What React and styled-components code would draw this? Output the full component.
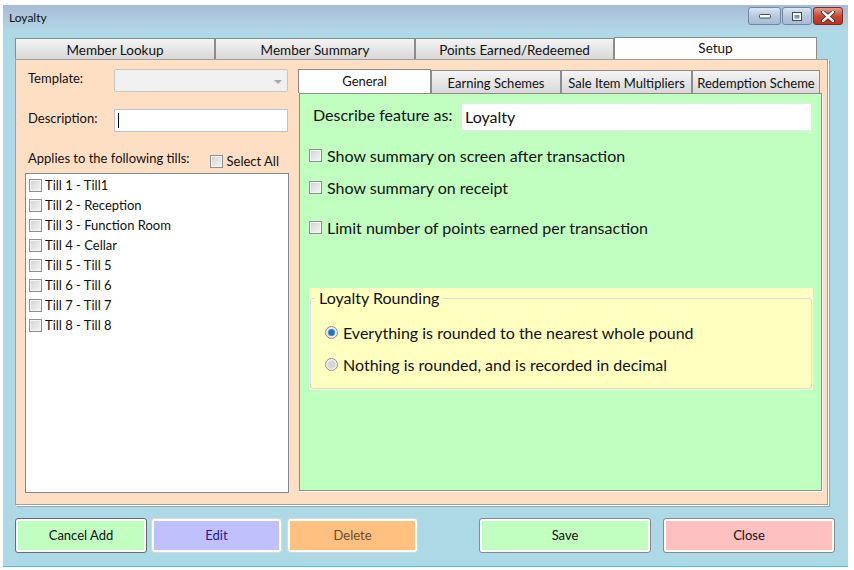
import React from 'react'
import styled, { createGlobalStyle } from 'styled-components'

const GlobalStyle = createGlobalStyle`
  html, body { margin: 0; padding: 0; background: #fff; }
  body { font-family: "Lato", "Noto Sans", sans-serif; color: #111; }
  * { box-sizing: border-box; }
`;

const Window = styled.div`
  margin: 5px 0 0 3px;
  width: 845px;
  height: 562px;
  background: #add8e6;
  border-bottom: 1px solid #3fc4ee;
  display: flex;
  flex-direction: column;
`;

const TitleBar = styled.div`
  height: 27px;
  display: flex;
  justify-content: space-between;
  background: linear-gradient(#a8bcd6, #b2d8e6);
`;

const TitleText = styled.div`
  font-size: 12px;
  padding: 5px 0 0 6px;
`;

const Controls = styled.div`
  display: flex;
  gap: 1px;
  margin: 2px 5px 0 0;
`;

const CtrlButton = styled.div`
  width: ${p => p.w}px;
  height: 18px;
  border: 1px solid ${p => (p.danger ? '#7a2a22' : '#6f86a4')};
  border-radius: 3px;
  background: ${p => (p.danger
    ? 'linear-gradient(#e39a8c, #c94a35 50%, #b9321e)'
    : 'linear-gradient(#dbe6f2, #b7c9de 50%, #a7bbd3)')};
  display: flex;
  align-items: center;
  justify-content: center;
`;

const Body = styled.div`
  padding: 5px 0 0 12px;
  display: flex;
  flex-direction: column;
`;

const TabStrip = styled.div`
  display: flex;
  align-items: flex-end;
  height: ${p => p.h}px;
`;

const MainTab = styled.div`
  width: ${p => p.w}px;
  height: ${p => (p.active ? 22 : 21)}px;
  border: 1px solid #8c8c8c;
  border-bottom: none;
  background: ${p => (p.active ? '#fff' : 'linear-gradient(#f4f4f4, #e6e6e6 50%, #d8d8d8)')};
  font-size: 13.5px;
  display: flex;
  justify-content: center;
  align-items: ${p => (p.active ? 'flex-start' : 'center')};
  padding-top: ${p => (p.active ? 2 : 1)}px;
  white-space: nowrap;
`;

const TabPanel = styled.div`
  width: 813px;
  height: 446px;
  background: #ffdfc3;
  border: 1px solid #a0a0a0;
  box-shadow: 1px 1px 0 #fff, 2px 2px 0 #9aa;
  padding: 9px 0 0 9px;
  display: flex;
  gap: 9px;
`;

const LeftCol = styled.div`
  width: 264px;
  display: flex;
  flex-direction: column;
`;

const FieldRow = styled.div`
  display: flex;
  align-items: center;
  height: 23px;
  margin-top: ${p => p.mt || 0}px;
`;

const SmallLabel = styled.div`
  width: 89px;
  padding-left: 3px;
  font-size: 13px;
  margin-top: -6px;
`;

const Combo = styled.div`
  width: 174px;
  height: 23px;
  border: 1px solid #c6c6c6;
  border-radius: 2px;
  background: #f0f0f0;
  display: flex;
  justify-content: flex-end;
  align-items: center;
  padding-right: 5px;
`;

const Arrow = styled.div`
  width: 0;
  height: 0;
  border-left: 4px solid transparent;
  border-right: 4px solid transparent;
  border-top: 4px solid #a8a8a8;
  margin-top: 2px;
`;

const TextBox = styled.div`
  width: ${p => p.w}px;
  height: ${p => p.h}px;
  background: #fff;
  border: 1px solid ${p => p.bc || '#abadb3'};
  display: flex;
  align-items: center;
  padding: 0 0 1px 3px;
  font-size: 16px;
`;

const Caret = styled.div`
  width: 1px;
  height: 15px;
  background: #000;
`;

const TillsHeader = styled.div`
  height: 41px;
  display: flex;
  align-items: flex-end;
  padding: 0 10px 7px 3px;
  font-size: 13px;
`;

const SelectAll = styled.label`
  margin-left: auto;
  margin-bottom: -3px;
  display: flex;
  align-items: center;
  gap: 4px;
  font-size: 13px;
`;

const Box = styled.span`
  display: inline-block;
  flex: none;
  width: 13px;
  height: 13px;
  border: 1px solid #8f8f8f;
  background: linear-gradient(135deg, #d2d2d2, #f6f6f6);
  box-shadow: inset 0 0 0 1px #f4f4f4;
`;

const TillList = styled.div`
  width: 264px;
  height: 320px;
  background: #fff;
  border: 1px solid #828790;
  padding: 1px 0 0 3px;
`;

const TillItem = styled.div`
  height: 20px;
  display: flex;
  align-items: center;
  gap: 3px;
  font-size: 13px;
`;

const RightCol = styled.div`
  width: 524px;
  display: flex;
  flex-direction: column;
`;

const SubTab = styled(MainTab)`
  height: ${p => (p.active ? 24 : 23)}px;
  padding-top: ${p => (p.active ? 3 : 1)}px;
  font-size: 13px;
`;

const GreenPanel = styled.div`
  margin-left: 1px;
  width: 523px;
  height: 398px;
  background: #c0ffc0;
  border: 1px solid #8d8d8d;
  box-shadow: 1px 1px 0 #fff;
  padding-top: 9px;
  display: flex;
  flex-direction: column;
`;

const DescribeRow = styled.div`
  display: flex;
  align-items: center;
  height: 28px;
`;

const BigLabel = styled.div`
  width: 161px;
  padding-left: 13px;
  font-size: 16px;
  margin-top: -5px;
`;

const CheckRow = styled.label`
  height: 32px;
  display: flex;
  align-items: center;
  gap: 5px;
  padding-left: 9px;
  font-size: 16px;
  margin-top: ${p => p.mt || 0}px;
  span + & { margin-top: 0; }
`;

const Group = styled.div`
  margin: 45px 0 0 9px;
  width: 504px;
  height: 102px;
  background: #ffffc0;
  padding: 0 0 0 1px;
`;

const Fieldset = styled.fieldset`
  margin: 0;
  width: 502px;
  height: 101px;
  border: 1px solid #d5dee6;
  border-radius: 3px;
  padding: 8px 0 0 0;
`;

const Legend = styled.legend`
  margin-left: 4px;
  padding: 0 4px;
  font-size: 16px;
  line-height: 20px;
`;

const RadioRow = styled.label`
  height: 32px;
  display: flex;
  align-items: center;
  gap: 5px;
  padding-left: 14px;
  font-size: 16px;
`;

const Radio = styled.span`
  flex: none;
  width: 13px;
  height: 13px;
  border-radius: 50%;
  border: 1px solid #8e8f8f;
  background: ${p => (p.on
    ? 'radial-gradient(circle, #2a6fb8 0 2.5px, #5fa3e0 3.5px, #e8e8e8 4px)'
    : 'radial-gradient(circle, #d4d4d4 0 3px, #f2f2f2 5px)')};
`;

const ButtonRow = styled.div`
  display: flex;
  margin-top: 13px;
  height: 35px;
`;

const Button = styled.button`
  width: ${p => p.w}px;
  height: 35px;
  margin-left: ${p => p.ml || 0}px;
  background: ${p => p.bg};
  color: ${p => p.fg || '#111'};
  border: 1px solid ${p => p.bc};
  border-radius: 3px;
  box-shadow: inset 0 0 0 2px #fff;
  font-family: "Lato", "Noto Sans", sans-serif;
  font-size: 13px;
  padding: 0 0 2px;
`;

const mainTabs = [
  ['Member Lookup', 200],
  ['Member Summary', 200],
  ['Points Earned/Redeemed', 199],
  ['Setup', 203, true],
]

const subTabs = [
  ['General', 133, true],
  ['Earning Schemes', 130],
  ['Sale Item Multipliers', 131],
  ['Redemption Scheme', 128],
]

const tills = [
  'Till 1 - Till1',
  'Till 2 - Reception',
  'Till 3 - Function Room',
  'Till 4 - Cellar',
  'Till 5 - Till 5',
  'Till 6 - Till 6',
  'Till 7 - Till 7',
  'Till 8 - Till 8',
]

const App = () => {
  return (
    <>
      <GlobalStyle />
      <Window>
        <TitleBar>
          <TitleText>Loyalty</TitleText>
          <Controls>
            <CtrlButton w={33}>
              <svg width="12" height="6" viewBox="0 0 12 6">
                <rect x="0.5" y="1.5" width="11" height="3.5" rx="1" fill="#fff" stroke="#3d4c5e" />
              </svg>
            </CtrlButton>
            <CtrlButton w={30}>
              <svg width="10" height="9" viewBox="0 0 10 9">
                <rect x="0.5" y="0.5" width="9" height="8" fill="#fff" stroke="#3d4c5e" />
                <rect x="2.5" y="3" width="5" height="3.5" fill="#7f93ab" />
              </svg>
            </CtrlButton>
            <CtrlButton w={30} danger>
              <svg width="14" height="11" viewBox="0 0 14 11">
                <path d="M2 1 L12 10 M12 1 L2 10" stroke="#4a1a14" strokeWidth="4" strokeLinecap="round" />
                <path d="M2 1 L12 10 M12 1 L2 10" stroke="#fff" strokeWidth="2.4" strokeLinecap="round" />
              </svg>
            </CtrlButton>
          </Controls>
        </TitleBar>

        <Body>
          <TabStrip h={22}>
            {mainTabs.map(([t, w, a]) => (
              <MainTab key={t} w={w} active={a}>{t}</MainTab>
            ))}
          </TabStrip>

          <TabPanel>
            <LeftCol>
              <FieldRow>
                <SmallLabel>Template:</SmallLabel>
                <Combo><Arrow /></Combo>
              </FieldRow>
              <FieldRow mt={17}>
                <SmallLabel>Description:</SmallLabel>
                <TextBox w={174} h={23} bc="#b9c5d3"><Caret /></TextBox>
              </FieldRow>
              <TillsHeader>
                Applies to the following tills:
                <SelectAll><Box />Select All</SelectAll>
              </TillsHeader>
              <TillList>
                {tills.map(t => (
                  <TillItem key={t}><Box />{t}</TillItem>
                ))}
              </TillList>
            </LeftCol>

            <RightCol>
              <TabStrip h={24}>
                {subTabs.map(([t, w, a]) => (
                  <SubTab key={t} w={w} active={a}>{t}</SubTab>
                ))}
              </TabStrip>
              <GreenPanel>
                <DescribeRow>
                  <BigLabel>Describe feature as:</BigLabel>
                  <TextBox w={351} h={28} bc="#e2ebe2">Loyalty</TextBox>
                </DescribeRow>
                <CheckRow mt={8}><Box />Show summary on screen after transaction</CheckRow>
                <CheckRow><Box />Show summary on receipt</CheckRow>
                <CheckRow mt={8}><Box />Limit number of points earned per transaction</CheckRow>
                <Group>
                  <Fieldset>
                    <Legend>Loyalty Rounding</Legend>
                    <RadioRow><Radio on />Everything is rounded to the nearest whole pound</RadioRow>
                    <RadioRow><Radio />Nothing is rounded, and is recorded in decimal</RadioRow>
                  </Fieldset>
                </Group>
              </GreenPanel>
            </RightCol>
          </TabPanel>

          <ButtonRow>
            <Button w={132} bg="#c0ffc0" bc="#6b6b6b">Cancel Add</Button>
            <Button w={131} ml={4} bg="#c0c0ff" bc="#d8d8e0" fg="#1c1c8a">Edit</Button>
            <Button w={131} ml={5} bg="#ffc080" bc="#d8d8d8" fg="#6e4a2e">Delete</Button>
            <Button w={172} ml={61} bg="#c0ffc0" bc="#8a8a8a">Save</Button>
            <Button w={172} ml={12} bg="#ffc0c0" bc="#8a8a8a">Close</Button>
          </ButtonRow>
        </Body>
      </Window>
    </>
  )
}

export default App
